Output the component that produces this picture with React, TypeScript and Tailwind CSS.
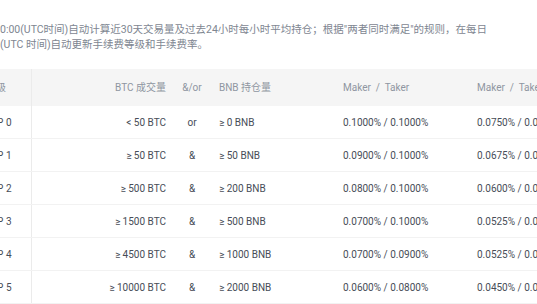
import React from 'react';

interface Tier {
  level: string;
  btc: string;
  op: string;
  bnb: string;
  fee: string;
  feeBnb: string;
}

const tiers: Tier[] = [
  { level: 'VIP 0', btc: '< 50 BTC', op: 'or', bnb: '≥ 0 BNB', fee: '0.1000% / 0.1000%', feeBnb: '0.0750% / 0.0750%' },
  { level: 'VIP 1', btc: '≥ 50 BTC', op: '&', bnb: '≥ 50 BNB', fee: '0.0900% / 0.1000%', feeBnb: '0.0675% / 0.0750%' },
  { level: 'VIP 2', btc: '≥ 500 BTC', op: '&', bnb: '≥ 200 BNB', fee: '0.0800% / 0.1000%', feeBnb: '0.0600% / 0.0750%' },
  { level: 'VIP 3', btc: '≥ 1500 BTC', op: '&', bnb: '≥ 500 BNB', fee: '0.0700% / 0.1000%', feeBnb: '0.0525% / 0.0750%' },
  { level: 'VIP 4', btc: '≥ 4500 BTC', op: '&', bnb: '≥ 1000 BNB', fee: '0.0700% / 0.0900%', feeBnb: '0.0525% / 0.0675%' },
  { level: 'VIP 5', btc: '≥ 10000 BTC', op: '&', bnb: '≥ 2000 BNB', fee: '0.0600% / 0.0800%', feeBnb: '0.0450% / 0.0600%' },
];

const cols = 'grid grid-cols-[72px_144px_32px_125px_134px_134px]';

export default function App() {
  return (
    <div className="w-[537px] h-[304px] overflow-hidden bg-white font-['Roboto','Noto_Sans_CJK_SC',sans-serif]">
      <div className="pt-[22px] text-[10.5px] leading-[15px] text-[#7e8691] whitespace-nowrap">
        <div>0:00(UTC时间)自动计算近30天交易量及过去24小时每小时平均持仓；根据"两者同时满足"的规则，在每日</div>
        <div>(UTC 时间)自动更新手续费等级和手续费率。</div>
      </div>

      <div className="mt-[17px] -ml-[40px] w-[700px] text-[10px]">
        <div className={`${cols} h-[37px] items-center bg-[#f5f5f5] text-[#8f96a1]`}>
          <div className="h-full flex items-center pl-[26px] border-r border-[#ebebeb]">等级</div>
          <div className="text-right pr-[10px]">BTC 成交量</div>
          <div className="text-center">&amp;/or</div>
          <div className="pl-[11px]">BNB 持仓量</div>
          <div className="pl-[10px]">Maker&nbsp; /&nbsp; Taker</div>
          <div className="pl-[10px]">Maker&nbsp; /&nbsp; Taker</div>
        </div>
        {tiers.map((t) => (
          <div key={t.level} className={`${cols} h-[33px] items-center border-b border-[#f2f2f2] text-[#474d57]`}>
            <div className="h-full flex items-center pl-[28px] border-r border-[#ebebeb]">{t.level}</div>
            <div className="text-right pr-[10px]">{t.btc}</div>
            <div className="text-center">{t.op}</div>
            <div className="pl-[11px]">{t.bnb}</div>
            <div className="pl-[10px]">{t.fee}</div>
            <div className="pl-[10px]">{t.feeBnb}</div>
          </div>
        ))}
      </div>
    </div>
  );
}
